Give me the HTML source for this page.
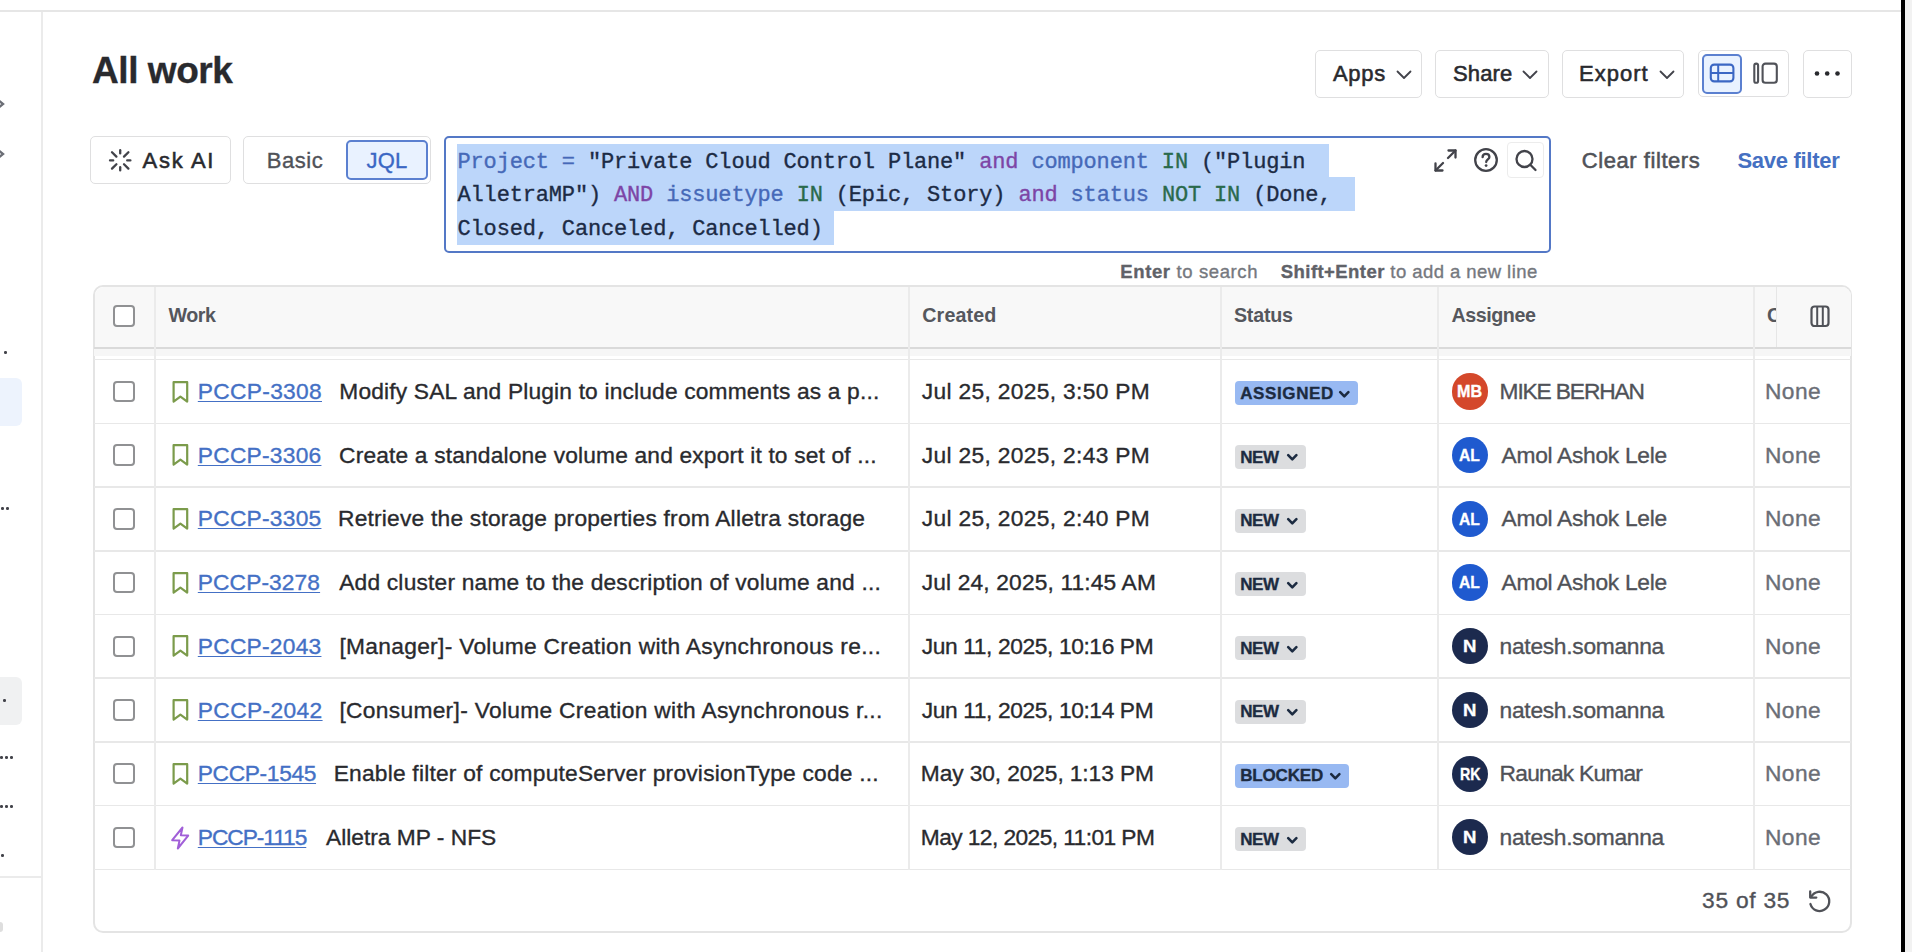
<!DOCTYPE html>
<html>
<head>
<meta charset="utf-8">
<style>
*{box-sizing:border-box;margin:0;padding:0}
html,body{width:1912px;height:952px;overflow:hidden;background:#fff}
body{position:relative;font-family:"Liberation Sans",sans-serif;color:#292a2e}
.a{position:absolute}
.t{position:absolute;white-space:nowrap;line-height:1;-webkit-text-stroke:0.35px currentColor}
.mono{font-family:"Liberation Mono",monospace}
</style>
</head>
<body>
<div class="a" style="left:0px;top:10px;width:1901px;height:2px;background:#e6e6e6"></div>
<div class="a" style="left:41px;top:12px;width:2px;height:940px;background:#ebebeb"></div>
<div class="a" style="left:0px;top:876px;width:41px;height:2px;background:#ebebeb"></div>
<div class="a" style="left:1901px;top:0px;width:4px;height:952px;background:#000"></div>
<div class="a" style="left:1905px;top:0px;width:7px;height:952px;background:#f2f2f2"></div>
<svg class="a" style="left:0;top:97px" width="6" height="14" viewBox="0 0 6 14"><path d="M-3 2 L3 7 L-3 12" fill="none" stroke="#6b6e76" stroke-width="2.4"/></svg>
<svg class="a" style="left:0;top:147px" width="6" height="14" viewBox="0 0 6 14"><path d="M-3 2 L3 7 L-3 12" fill="none" stroke="#6b6e76" stroke-width="2.4"/></svg>
<div class="a" style="left:0px;top:378px;width:22px;height:48px;background:#edf3fd;border-radius:0 6px 6px 0"></div>
<div class="a" style="left:0px;top:677px;width:22px;height:48px;background:#f0f1f2;border-radius:0 6px 6px 0"></div>
<div class="a" style="left:0px;top:922px;width:3px;height:10px;background:#c8c8c8;border-radius:0 3px 3px 0;opacity:0.6"></div>
<div class="a" style="left:4px;top:351px;width:2.5px;height:2.5px;background:#42434a;border-radius:50%"></div>
<div class="a" style="left:1px;top:507px;width:2.5px;height:2.5px;background:#42434a;border-radius:50%"></div>
<div class="a" style="left:6px;top:507px;width:2.5px;height:2.5px;background:#42434a;border-radius:50%"></div>
<div class="a" style="left:3px;top:699px;width:2.5px;height:2.5px;background:#42434a;border-radius:50%"></div>
<div class="a" style="left:0px;top:756px;width:2.5px;height:2.5px;background:#42434a;border-radius:50%"></div>
<div class="a" style="left:5px;top:756px;width:2.5px;height:2.5px;background:#42434a;border-radius:50%"></div>
<div class="a" style="left:10px;top:756px;width:2.5px;height:2.5px;background:#42434a;border-radius:50%"></div>
<div class="a" style="left:0px;top:805px;width:2.5px;height:2.5px;background:#42434a;border-radius:50%"></div>
<div class="a" style="left:5px;top:805px;width:2.5px;height:2.5px;background:#42434a;border-radius:50%"></div>
<div class="a" style="left:10px;top:805px;width:2.5px;height:2.5px;background:#42434a;border-radius:50%"></div>
<div class="a" style="left:1px;top:854px;width:2.5px;height:2.5px;background:#42434a;border-radius:50%"></div>
<div class="t" style="left:92.00px;top:52.33px;font-size:37px;font-weight:700;letter-spacing:-0.429px;color:#292a2e;">All work</div>
<div class="a" style="left:1315px;top:50px;width:107px;height:48px;border:1.6px solid #dfdfe0;border-radius:5px;background:#fff"></div>
<div class="t" style="left:1333.00px;top:63.01px;font-size:22px;font-weight:400;letter-spacing:0.667px;color:#292a2e;-webkit-text-stroke:0.55px currentColor">Apps</div>
<svg class="a" style="left:1396px;top:70px" width="16" height="10" viewBox="0 0 16 10"><path d="M1.5 1.5 L8 8 L14.5 1.5" fill="none" stroke="#42434a" stroke-width="1.8" stroke-linecap="round" stroke-linejoin="round"/></svg>
<div class="a" style="left:1435px;top:50px;width:114px;height:48px;border:1.6px solid #dfdfe0;border-radius:5px;background:#fff"></div>
<div class="t" style="left:1453.00px;top:63.01px;font-size:22px;font-weight:400;letter-spacing:0.125px;color:#292a2e;-webkit-text-stroke:0.55px currentColor">Share</div>
<svg class="a" style="left:1522px;top:70px" width="16" height="10" viewBox="0 0 16 10"><path d="M1.5 1.5 L8 8 L14.5 1.5" fill="none" stroke="#42434a" stroke-width="1.8" stroke-linecap="round" stroke-linejoin="round"/></svg>
<div class="a" style="left:1562px;top:50px;width:122px;height:48px;border:1.6px solid #dfdfe0;border-radius:5px;background:#fff"></div>
<div class="t" style="left:1579.00px;top:63.01px;font-size:22px;font-weight:400;letter-spacing:1.000px;color:#292a2e;-webkit-text-stroke:0.55px currentColor">Export</div>
<svg class="a" style="left:1658.5px;top:70px" width="16" height="10" viewBox="0 0 16 10"><path d="M1.5 1.5 L8 8 L14.5 1.5" fill="none" stroke="#42434a" stroke-width="1.8" stroke-linecap="round" stroke-linejoin="round"/></svg>
<div class="a" style="left:1698px;top:50px;width:91px;height:47px;border:1.6px solid #dfdfe0;border-radius:5px;background:#fff"></div>
<div class="a" style="left:1702px;top:54px;width:40px;height:40px;border:2px solid #5b80d0;border-radius:5px;background:#e9f2ff"></div>
<svg class="a" style="left:1708px;top:62px" width="28" height="22" viewBox="0 0 28 22"><rect x="2.8" y="2.6" width="22.6" height="16.8" rx="3.4" fill="none" stroke="#3b67c4" stroke-width="2.1"/><line x1="2.8" y1="11" x2="25.4" y2="11" stroke="#3b67c4" stroke-width="2"/><line x1="10.2" y1="2.6" x2="10.2" y2="19.4" stroke="#3b67c4" stroke-width="2"/></svg>
<svg class="a" style="left:1751px;top:61px" width="30" height="24" viewBox="0 0 30 24"><rect x="3.3" y="2.6" width="3.8" height="19.2" rx="1.9" fill="none" stroke="#505258" stroke-width="2.1"/><rect x="11.6" y="2.6" width="14.2" height="19.2" rx="2.8" fill="none" stroke="#505258" stroke-width="2.1"/></svg>
<div class="a" style="left:1803px;top:50px;width:49px;height:48px;border:1.6px solid #dfdfe0;border-radius:5px;background:#fff"></div>
<svg class="a" style="left:1812px;top:68px" width="32" height="12" viewBox="0 0 32 12"><circle cx="5" cy="5.5" r="2.3" fill="#292a2e"/><circle cx="15.2" cy="5.5" r="2.3" fill="#292a2e"/><circle cx="25.5" cy="5.5" r="2.3" fill="#292a2e"/></svg>
<div class="a" style="left:90px;top:136px;width:141px;height:48px;border:1.6px solid #dfdfe0;border-radius:5px;background:#fff"></div>
<svg class="a" style="left:106px;top:146px" width="29" height="29" viewBox="0 0 29 29"><g stroke="#42434a" stroke-width="2.3" stroke-linecap="round" fill="none">
<line x1="14.2" y1="4.2" x2="14.2" y2="7.4"/><line x1="14.2" y1="21.2" x2="14.2" y2="24.4"/>
<line x1="4" y1="14.4" x2="7.2" y2="14.4"/><line x1="21.2" y1="14.4" x2="24.4" y2="14.4"/>
<line x1="6" y1="6.2" x2="10.4" y2="10.6"/><line x1="18" y1="18.2" x2="22.4" y2="22.6"/>
<line x1="22.4" y1="6.2" x2="18" y2="10.6"/><line x1="10.4" y1="18.2" x2="6" y2="22.6"/></g></svg>
<div class="t" style="left:142.60px;top:149.91px;font-size:22px;font-weight:400;letter-spacing:1.680px;color:#292a2e;-webkit-text-stroke:0.55px currentColor">Ask AI</div>
<div class="a" style="left:243px;top:136px;width:188px;height:48px;border:1.6px solid #dfdfe0;border-radius:5px;background:#fff"></div>
<div class="t" style="left:266.80px;top:149.91px;font-size:22px;font-weight:400;letter-spacing:0.550px;color:#505258;">Basic</div>
<div class="a" style="left:346px;top:140px;width:82px;height:40px;border:2px solid #5b80d0;border-radius:5px;background:#e9f2ff"></div>
<div class="t" style="left:366.60px;top:149.91px;font-size:22px;font-weight:400;letter-spacing:0.200px;color:#3b67c4;">JQL</div>
<div class="t" style="left:1581.80px;top:149.91px;font-size:22px;font-weight:400;letter-spacing:0.558px;color:#505258;-webkit-text-stroke:0.55px currentColor">Clear filters</div>
<div class="t" style="left:1737.40px;top:149.91px;font-size:22px;font-weight:700;letter-spacing:-0.280px;color:#4570c2;-webkit-text-stroke:0">Save filter</div>
<div class="t" style="left:1120.30px;top:262.87px;font-size:18.5px;font-weight:400;letter-spacing:0.621px;color:#75787e;"><b style="color:#606268">Enter</b> to search</div>
<div class="t" style="left:1280.80px;top:262.87px;font-size:18.5px;font-weight:400;letter-spacing:0.436px;color:#75787e;"><b style="color:#606268">Shift+Enter</b> to add a new line</div>
<div class="a" style="left:444px;top:136px;width:1107px;height:117px;border:2.5px solid #5478c6;border-radius:5px;background:#fff"></div>
<div class="a" style="left:457px;top:144px;width:872px;height:34px;background:#bcd6fa"></div>
<div class="a" style="left:457px;top:177px;width:898px;height:34px;background:#bcd6fa"></div>
<div class="a" style="left:457px;top:210px;width:377px;height:35px;background:#bcd6fa"></div>
<div class="t mono" style="left:457.5px;top:145.70px;font-size:22px;letter-spacing:-0.16px;line-height:33.6px;white-space:pre"><span style="color:#4669b8">Project</span> <span style="color:#4669b8">=</span> <span style="color:#1c2b45">"Private Cloud Control Plane"</span> <span style="color:#7d45a6">and</span> <span style="color:#4669b8">component</span> <span style="color:#2a6a4c">IN</span> <span style="color:#1c2b45">("Plugin</span> </div>
<div class="t mono" style="left:457.5px;top:179.30px;font-size:22px;letter-spacing:-0.16px;line-height:33.6px;white-space:pre"><span style="color:#1c2b45">AlletraMP")</span> <span style="color:#7d45a6">AND</span> <span style="color:#4669b8">issuetype</span> <span style="color:#2a6a4c">IN</span> <span style="color:#1c2b45">(Epic, Story)</span> <span style="color:#7d45a6">and</span> <span style="color:#4669b8">status</span> <span style="color:#2a6a4c">NOT IN</span> <span style="color:#1c2b45">(Done,</span> </div>
<div class="t mono" style="left:457.5px;top:212.90px;font-size:22px;letter-spacing:-0.16px;line-height:33.6px;white-space:pre"><span style="color:#1c2b45">Closed, Canceled, Cancelled)</span></div>
<svg class="a" style="left:1432px;top:147px" width="27" height="27" viewBox="0 0 27 27"><g stroke="#42434a" stroke-width="2.3" fill="none" stroke-linecap="round" stroke-linejoin="round"><path d="M16.5 3.5 H23.5 V10.5"/><path d="M23.5 3.5 L16 11"/><path d="M3.5 16.5 V23.5 H10.5"/><path d="M3.5 23.5 L11 16"/></g></svg>
<svg class="a" style="left:1472px;top:146px" width="28" height="28" viewBox="0 0 28 28"><circle cx="14" cy="14" r="10.8" fill="none" stroke="#42434a" stroke-width="2.3"/><path d="M10.6 11.2 C10.6 8.9 12.2 7.8 14 7.8 C15.9 7.8 17.4 9 17.4 10.9 C17.4 13.2 14.2 13.6 14.2 16" fill="none" stroke="#42434a" stroke-width="2.3" stroke-linecap="round"/><circle cx="14.1" cy="19.6" r="1.4" fill="#42434a"/></svg>
<div class="a" style="left:1507px;top:142px;width:37px;height:36px;border:1.5px solid #ececec;border-radius:4px"></div>
<svg class="a" style="left:1512px;top:147px" width="28" height="28" viewBox="0 0 28 28"><circle cx="12.5" cy="12" r="8" fill="none" stroke="#42434a" stroke-width="2.3"/><line x1="18.3" y1="17.8" x2="23.5" y2="23" stroke="#42434a" stroke-width="2.3" stroke-linecap="round"/></svg>
<div class="a" style="left:93px;top:285px;width:1759px;height:648px;border:2px solid #e4e4e4;border-radius:10px;background:#fff;overflow:hidden"></div>
<div class="a" style="left:94.5px;top:286.5px;width:1756px;height:60.5px;background:#f8f8f8;border-radius:9px 9px 0 0"></div>
<div class="a" style="left:94px;top:347px;width:1757px;height:2px;background:#dadada"></div>
<div class="a" style="left:94px;top:349px;width:1757px;height:7px;background:#f6f6f6"></div>
<div class="a" style="left:94px;top:358.9px;width:1757px;height:1.6px;background:#e8e8e8"></div>
<div class="a" style="left:94px;top:422.6px;width:1757px;height:1.6px;background:#e8e8e8"></div>
<div class="a" style="left:94px;top:486.3px;width:1757px;height:1.6px;background:#e8e8e8"></div>
<div class="a" style="left:94px;top:550.0px;width:1757px;height:1.6px;background:#e8e8e8"></div>
<div class="a" style="left:94px;top:613.7px;width:1757px;height:1.6px;background:#e8e8e8"></div>
<div class="a" style="left:94px;top:677.4px;width:1757px;height:1.6px;background:#e8e8e8"></div>
<div class="a" style="left:94px;top:741.1px;width:1757px;height:1.6px;background:#e8e8e8"></div>
<div class="a" style="left:94px;top:804.8px;width:1757px;height:1.6px;background:#e8e8e8"></div>
<div class="a" style="left:94px;top:868.5px;width:1757px;height:1.6px;background:#e8e8e8"></div>
<div class="a" style="left:154px;top:286.5px;width:2px;height:583.3px;background:#ebebeb"></div>
<div class="a" style="left:908px;top:286.5px;width:2px;height:583.3px;background:#ebebeb"></div>
<div class="a" style="left:1220px;top:286.5px;width:2px;height:583.3px;background:#ebebeb"></div>
<div class="a" style="left:1436.5px;top:286.5px;width:2px;height:583.3px;background:#ebebeb"></div>
<div class="a" style="left:1752.5px;top:286.5px;width:2px;height:583.3px;background:#ebebeb"></div>
<div class="a" style="left:1776px;top:286.5px;width:74.5px;height:60.5px;background:#f8f8f8;border-left:1.5px solid #e6e6e6;border-top-right-radius:9px"></div>
<div class="a" style="left:113.3px;top:305px;width:21.5px;height:21.5px;border:2px solid #909193;border-radius:4px;background:#fff"></div>
<div class="t" style="left:168.40px;top:305.55px;font-size:19.7px;font-weight:700;letter-spacing:-0.467px;color:#55575d;-webkit-text-stroke:0">Work</div>
<div class="t" style="left:922.30px;top:305.55px;font-size:19.7px;font-weight:700;letter-spacing:0.100px;color:#55575d;-webkit-text-stroke:0">Created</div>
<div class="t" style="left:1233.90px;top:305.55px;font-size:19.7px;font-weight:700;letter-spacing:-0.200px;color:#55575d;-webkit-text-stroke:0">Status</div>
<div class="t" style="left:1451.50px;top:305.55px;font-size:19.7px;font-weight:700;letter-spacing:-0.457px;color:#55575d;-webkit-text-stroke:0">Assignee</div>
<div class="a" style="left:1766px;top:300px;width:10px;height:30px;overflow:hidden"><div class="t" style="left:1px;top:5.6px;font-size:19.7px;font-weight:700;color:#55575d;-webkit-text-stroke:0">C</div></div>
<svg class="a" style="left:1808px;top:303px" width="24" height="26" viewBox="0 0 24 26"><rect x="3.5" y="3.5" width="17" height="19.5" rx="3" fill="none" stroke="#505258" stroke-width="2.2"/><line x1="9.2" y1="3.5" x2="9.2" y2="23" stroke="#505258" stroke-width="2"/><line x1="14.8" y1="3.5" x2="14.8" y2="23" stroke="#505258" stroke-width="2"/></svg>
<div class="a" style="left:113.3px;top:380.75px;width:21.5px;height:21.5px;border:2px solid #909193;border-radius:4px;background:#fff"></div>
<svg class="a" style="left:170px;top:378.6px" width="21" height="26" viewBox="0 0 21 26"><path d="M3.6 3.2 H17.2 V22.6 L10.4 17.6 L3.6 22.6 Z" fill="none" stroke="#7b9b4b" stroke-width="2.2" stroke-linejoin="round"/></svg>
<div class="t" style="left:197.80px;top:380.03px;font-size:22.75px;font-weight:400;letter-spacing:0.312px;color:#4470c5;text-decoration:underline;text-underline-offset:2px;text-decoration-thickness:1.2px">PCCP-3308</div>
<div class="t" style="left:339.30px;top:380.03px;font-size:22.75px;font-weight:400;letter-spacing:0.168px;color:#292a2e;">Modify SAL and Plugin to include comments as a p...</div>
<div class="t" style="left:921.80px;top:380.03px;font-size:22.75px;font-weight:400;letter-spacing:0.335px;color:#292a2e;">Jul 25, 2025, 3:50 PM</div>
<div class="a" style="left:1235px;top:381.2px;width:123px;height:24px;background:#98b9f2;border-radius:4px"></div>
<div class="t" style="left:1240.20px;top:384.99px;font-size:17px;font-weight:700;letter-spacing:0.614px;color:#1c2b41;">ASSIGNED</div>
<svg class="a" style="left:1338px;top:389.8px" width="13" height="9" viewBox="0 0 13 9"><path d="M2.2 2.2 L6.3 6.3 L10.4 2.2" fill="none" stroke="#1c2b41" stroke-width="2.6" stroke-linecap="round" stroke-linejoin="round"/></svg>
<div class="a" style="left:1451.7px;top:373.4px;width:36.2px;height:36.2px;border-radius:50%;background:#d4482b"></div>
<div class="t" style="left:1457.15px;top:383.38px;font-size:17px;font-weight:700;letter-spacing:0.000px;color:#ffffff;transform:scaleX(0.9480);transform-origin:0 0;">MB</div>
<div class="t" style="left:1499.60px;top:380.03px;font-size:22.75px;font-weight:400;letter-spacing:-1.140px;color:#505258;">MIKE BERHAN</div>
<div class="t" style="left:1764.90px;top:380.03px;font-size:22.75px;font-weight:400;letter-spacing:0.500px;color:#6b6e76;">None</div>
<div class="a" style="left:113.3px;top:444.45px;width:21.5px;height:21.5px;border:2px solid #909193;border-radius:4px;background:#fff"></div>
<svg class="a" style="left:170px;top:442.2px" width="21" height="26" viewBox="0 0 21 26"><path d="M3.6 3.2 H17.2 V22.6 L10.4 17.6 L3.6 22.6 Z" fill="none" stroke="#7b9b4b" stroke-width="2.2" stroke-linejoin="round"/></svg>
<div class="t" style="left:197.80px;top:443.73px;font-size:22.75px;font-weight:400;letter-spacing:0.250px;color:#4470c5;text-decoration:underline;text-underline-offset:2px;text-decoration-thickness:1.2px">PCCP-3306</div>
<div class="t" style="left:339.10px;top:443.73px;font-size:22.75px;font-weight:400;letter-spacing:0.168px;color:#292a2e;">Create a standalone volume and export it to set of ...</div>
<div class="t" style="left:921.80px;top:443.73px;font-size:22.75px;font-weight:400;letter-spacing:0.335px;color:#292a2e;">Jul 25, 2025, 2:43 PM</div>
<div class="a" style="left:1235px;top:444.9px;width:71px;height:24px;background:#dcdddf;border-radius:4px"></div>
<div class="t" style="left:1240.20px;top:448.69px;font-size:17px;font-weight:700;letter-spacing:-0.450px;color:#1c2b41;">NEW</div>
<svg class="a" style="left:1286px;top:453.4px" width="13" height="9" viewBox="0 0 13 9"><path d="M2.2 2.2 L6.3 6.3 L10.4 2.2" fill="none" stroke="#1c2b41" stroke-width="2.6" stroke-linecap="round" stroke-linejoin="round"/></svg>
<div class="a" style="left:1451.7px;top:437.1px;width:36.2px;height:36.2px;border-radius:50%;background:#1f5acf"></div>
<div class="t" style="left:1458.88px;top:447.08px;font-size:17px;font-weight:700;letter-spacing:0.000px;color:#ffffff;transform:scaleX(0.9190);transform-origin:0 0;">AL</div>
<div class="t" style="left:1501.60px;top:443.73px;font-size:22.75px;font-weight:400;letter-spacing:-0.286px;color:#505258;">Amol Ashok Lele</div>
<div class="t" style="left:1764.90px;top:443.73px;font-size:22.75px;font-weight:400;letter-spacing:0.500px;color:#6b6e76;">None</div>
<div class="a" style="left:113.3px;top:508.15000000000003px;width:21.5px;height:21.5px;border:2px solid #909193;border-radius:4px;background:#fff"></div>
<svg class="a" style="left:170px;top:506.0px" width="21" height="26" viewBox="0 0 21 26"><path d="M3.6 3.2 H17.2 V22.6 L10.4 17.6 L3.6 22.6 Z" fill="none" stroke="#7b9b4b" stroke-width="2.2" stroke-linejoin="round"/></svg>
<div class="t" style="left:197.80px;top:507.43px;font-size:22.75px;font-weight:400;letter-spacing:0.250px;color:#4470c5;text-decoration:underline;text-underline-offset:2px;text-decoration-thickness:1.2px">PCCP-3305</div>
<div class="t" style="left:338.00px;top:507.43px;font-size:22.75px;font-weight:400;letter-spacing:0.216px;color:#292a2e;">Retrieve the storage properties from Alletra storage</div>
<div class="t" style="left:921.80px;top:507.43px;font-size:22.75px;font-weight:400;letter-spacing:0.335px;color:#292a2e;">Jul 25, 2025, 2:40 PM</div>
<div class="a" style="left:1235px;top:508.7px;width:71px;height:24px;background:#dcdddf;border-radius:4px"></div>
<div class="t" style="left:1240.20px;top:512.38px;font-size:17px;font-weight:700;letter-spacing:-0.450px;color:#1c2b41;">NEW</div>
<svg class="a" style="left:1286px;top:517.2px" width="13" height="9" viewBox="0 0 13 9"><path d="M2.2 2.2 L6.3 6.3 L10.4 2.2" fill="none" stroke="#1c2b41" stroke-width="2.6" stroke-linecap="round" stroke-linejoin="round"/></svg>
<div class="a" style="left:1451.7px;top:500.8px;width:36.2px;height:36.2px;border-radius:50%;background:#1f5acf"></div>
<div class="t" style="left:1458.88px;top:510.79px;font-size:17px;font-weight:700;letter-spacing:0.000px;color:#ffffff;transform:scaleX(0.9190);transform-origin:0 0;">AL</div>
<div class="t" style="left:1501.60px;top:507.43px;font-size:22.75px;font-weight:400;letter-spacing:-0.286px;color:#505258;">Amol Ashok Lele</div>
<div class="t" style="left:1764.90px;top:507.43px;font-size:22.75px;font-weight:400;letter-spacing:0.500px;color:#6b6e76;">None</div>
<div class="a" style="left:113.3px;top:571.85px;width:21.5px;height:21.5px;border:2px solid #909193;border-radius:4px;background:#fff"></div>
<svg class="a" style="left:170px;top:569.6px" width="21" height="26" viewBox="0 0 21 26"><path d="M3.6 3.2 H17.2 V22.6 L10.4 17.6 L3.6 22.6 Z" fill="none" stroke="#7b9b4b" stroke-width="2.2" stroke-linejoin="round"/></svg>
<div class="t" style="left:197.80px;top:571.13px;font-size:22.75px;font-weight:400;letter-spacing:0.100px;color:#4470c5;text-decoration:underline;text-underline-offset:2px;text-decoration-thickness:1.2px">PCCP-3278</div>
<div class="t" style="left:339.20px;top:571.13px;font-size:22.75px;font-weight:400;letter-spacing:0.202px;color:#292a2e;">Add cluster name to the description of volume and ...</div>
<div class="t" style="left:921.80px;top:571.13px;font-size:22.75px;font-weight:400;letter-spacing:0.143px;color:#292a2e;">Jul 24, 2025, 11:45 AM</div>
<div class="a" style="left:1235px;top:572.4px;width:71px;height:24px;background:#dcdddf;border-radius:4px"></div>
<div class="t" style="left:1240.20px;top:576.08px;font-size:17px;font-weight:700;letter-spacing:-0.450px;color:#1c2b41;">NEW</div>
<svg class="a" style="left:1286px;top:580.9px" width="13" height="9" viewBox="0 0 13 9"><path d="M2.2 2.2 L6.3 6.3 L10.4 2.2" fill="none" stroke="#1c2b41" stroke-width="2.6" stroke-linecap="round" stroke-linejoin="round"/></svg>
<div class="a" style="left:1451.7px;top:564.4px;width:36.2px;height:36.2px;border-radius:50%;background:#1f5acf"></div>
<div class="t" style="left:1458.88px;top:574.49px;font-size:17px;font-weight:700;letter-spacing:0.000px;color:#ffffff;transform:scaleX(0.9190);transform-origin:0 0;">AL</div>
<div class="t" style="left:1501.60px;top:571.13px;font-size:22.75px;font-weight:400;letter-spacing:-0.286px;color:#505258;">Amol Ashok Lele</div>
<div class="t" style="left:1764.90px;top:571.13px;font-size:22.75px;font-weight:400;letter-spacing:0.500px;color:#6b6e76;">None</div>
<div class="a" style="left:113.3px;top:635.5500000000001px;width:21.5px;height:21.5px;border:2px solid #909193;border-radius:4px;background:#fff"></div>
<svg class="a" style="left:170px;top:633.4px" width="21" height="26" viewBox="0 0 21 26"><path d="M3.6 3.2 H17.2 V22.6 L10.4 17.6 L3.6 22.6 Z" fill="none" stroke="#7b9b4b" stroke-width="2.2" stroke-linejoin="round"/></svg>
<div class="t" style="left:197.80px;top:634.83px;font-size:22.75px;font-weight:400;letter-spacing:0.250px;color:#4470c5;text-decoration:underline;text-underline-offset:2px;text-decoration-thickness:1.2px">PCCP-2043</div>
<div class="t" style="left:339.40px;top:634.83px;font-size:22.75px;font-weight:400;letter-spacing:0.312px;color:#292a2e;">[Manager]- Volume Creation with Asynchronous re...</div>
<div class="t" style="left:921.80px;top:634.83px;font-size:22.75px;font-weight:400;letter-spacing:-0.386px;color:#292a2e;">Jun 11, 2025, 10:16 PM</div>
<div class="a" style="left:1235px;top:636.1px;width:71px;height:24px;background:#dcdddf;border-radius:4px"></div>
<div class="t" style="left:1240.20px;top:639.78px;font-size:17px;font-weight:700;letter-spacing:-0.450px;color:#1c2b41;">NEW</div>
<svg class="a" style="left:1286px;top:644.6px" width="13" height="9" viewBox="0 0 13 9"><path d="M2.2 2.2 L6.3 6.3 L10.4 2.2" fill="none" stroke="#1c2b41" stroke-width="2.6" stroke-linecap="round" stroke-linejoin="round"/></svg>
<div class="a" style="left:1451.7px;top:628.1px;width:36.2px;height:36.2px;border-radius:50%;background:#1c2a4e"></div>
<div class="t" style="left:1463.11px;top:638.19px;font-size:17px;font-weight:700;letter-spacing:0.000px;color:#ffffff;transform:scaleX(1.0900);transform-origin:0 0;">N</div>
<div class="t" style="left:1499.60px;top:634.83px;font-size:22.75px;font-weight:400;letter-spacing:-0.277px;color:#505258;">natesh.somanna</div>
<div class="t" style="left:1764.90px;top:634.83px;font-size:22.75px;font-weight:400;letter-spacing:0.500px;color:#6b6e76;">None</div>
<div class="a" style="left:113.3px;top:699.2500000000001px;width:21.5px;height:21.5px;border:2px solid #909193;border-radius:4px;background:#fff"></div>
<svg class="a" style="left:170px;top:697.1px" width="21" height="26" viewBox="0 0 21 26"><path d="M3.6 3.2 H17.2 V22.6 L10.4 17.6 L3.6 22.6 Z" fill="none" stroke="#7b9b4b" stroke-width="2.2" stroke-linejoin="round"/></svg>
<div class="t" style="left:197.80px;top:698.53px;font-size:22.75px;font-weight:400;letter-spacing:0.375px;color:#4470c5;text-decoration:underline;text-underline-offset:2px;text-decoration-thickness:1.2px">PCCP-2042</div>
<div class="t" style="left:339.40px;top:698.53px;font-size:22.75px;font-weight:400;letter-spacing:0.318px;color:#292a2e;">[Consumer]- Volume Creation with Asynchronous r...</div>
<div class="t" style="left:921.80px;top:698.53px;font-size:22.75px;font-weight:400;letter-spacing:-0.386px;color:#292a2e;">Jun 11, 2025, 10:14 PM</div>
<div class="a" style="left:1235px;top:699.8px;width:71px;height:24px;background:#dcdddf;border-radius:4px"></div>
<div class="t" style="left:1240.20px;top:703.49px;font-size:17px;font-weight:700;letter-spacing:-0.450px;color:#1c2b41;">NEW</div>
<svg class="a" style="left:1286px;top:708.3px" width="13" height="9" viewBox="0 0 13 9"><path d="M2.2 2.2 L6.3 6.3 L10.4 2.2" fill="none" stroke="#1c2b41" stroke-width="2.6" stroke-linecap="round" stroke-linejoin="round"/></svg>
<div class="a" style="left:1451.7px;top:691.9px;width:36.2px;height:36.2px;border-radius:50%;background:#1c2a4e"></div>
<div class="t" style="left:1463.11px;top:701.89px;font-size:17px;font-weight:700;letter-spacing:0.000px;color:#ffffff;transform:scaleX(1.0900);transform-origin:0 0;">N</div>
<div class="t" style="left:1499.60px;top:698.53px;font-size:22.75px;font-weight:400;letter-spacing:-0.277px;color:#505258;">natesh.somanna</div>
<div class="t" style="left:1764.90px;top:698.53px;font-size:22.75px;font-weight:400;letter-spacing:0.500px;color:#6b6e76;">None</div>
<div class="a" style="left:113.3px;top:762.9500000000002px;width:21.5px;height:21.5px;border:2px solid #909193;border-radius:4px;background:#fff"></div>
<svg class="a" style="left:170px;top:760.8px" width="21" height="26" viewBox="0 0 21 26"><path d="M3.6 3.2 H17.2 V22.6 L10.4 17.6 L3.6 22.6 Z" fill="none" stroke="#7b9b4b" stroke-width="2.2" stroke-linejoin="round"/></svg>
<div class="t" style="left:197.80px;top:762.23px;font-size:22.75px;font-weight:400;letter-spacing:-0.350px;color:#4470c5;text-decoration:underline;text-underline-offset:2px;text-decoration-thickness:1.2px">PCCP-1545</div>
<div class="t" style="left:333.70px;top:762.23px;font-size:22.75px;font-weight:400;letter-spacing:0.217px;color:#292a2e;">Enable filter of computeServer provisionType code ...</div>
<div class="t" style="left:920.80px;top:762.23px;font-size:22.75px;font-weight:400;letter-spacing:-0.105px;color:#292a2e;">May 30, 2025, 1:13 PM</div>
<div class="a" style="left:1235px;top:763.5px;width:114px;height:24px;background:#98b9f2;border-radius:4px"></div>
<div class="t" style="left:1240.20px;top:767.19px;font-size:17px;font-weight:700;letter-spacing:-0.167px;color:#1c2b41;">BLOCKED</div>
<svg class="a" style="left:1329px;top:772.0px" width="13" height="9" viewBox="0 0 13 9"><path d="M2.2 2.2 L6.3 6.3 L10.4 2.2" fill="none" stroke="#1c2b41" stroke-width="2.6" stroke-linecap="round" stroke-linejoin="round"/></svg>
<div class="a" style="left:1451.7px;top:755.6px;width:36.2px;height:36.2px;border-radius:50%;background:#1c2a4e"></div>
<div class="t" style="left:1459.66px;top:765.59px;font-size:17px;font-weight:700;letter-spacing:0.000px;color:#ffffff;transform:scaleX(0.8391);transform-origin:0 0;">RK</div>
<div class="t" style="left:1499.60px;top:762.23px;font-size:22.75px;font-weight:400;letter-spacing:-0.764px;color:#505258;">Raunak Kumar</div>
<div class="t" style="left:1764.90px;top:762.23px;font-size:22.75px;font-weight:400;letter-spacing:0.500px;color:#6b6e76;">None</div>
<div class="a" style="left:113.3px;top:826.6500000000001px;width:21.5px;height:21.5px;border:2px solid #909193;border-radius:4px;background:#fff"></div>
<svg class="a" style="left:168px;top:823.5px" width="24" height="28" viewBox="0 0 24 28"><path d="M14.5 3.5 L12.8 11.2 L20.2 11.6 L9.8 24.5 L11.5 16.6 L4.2 16.2 Z" fill="none" stroke="#a15fd8" stroke-width="2" stroke-linejoin="round"/></svg>
<div class="t" style="left:197.80px;top:825.93px;font-size:22.75px;font-weight:400;letter-spacing:-1.062px;color:#4470c5;text-decoration:underline;text-underline-offset:2px;text-decoration-thickness:1.2px">PCCP-1115</div>
<div class="t" style="left:326.00px;top:825.93px;font-size:22.75px;font-weight:400;letter-spacing:0.000px;color:#292a2e;">Alletra MP - NFS</div>
<div class="t" style="left:920.80px;top:825.93px;font-size:22.75px;font-weight:400;letter-spacing:-0.576px;color:#292a2e;">May 12, 2025, 11:01 PM</div>
<div class="a" style="left:1235px;top:827.2px;width:71px;height:24px;background:#dcdddf;border-radius:4px"></div>
<div class="t" style="left:1240.20px;top:830.88px;font-size:17px;font-weight:700;letter-spacing:-0.450px;color:#1c2b41;">NEW</div>
<svg class="a" style="left:1286px;top:835.7px" width="13" height="9" viewBox="0 0 13 9"><path d="M2.2 2.2 L6.3 6.3 L10.4 2.2" fill="none" stroke="#1c2b41" stroke-width="2.6" stroke-linecap="round" stroke-linejoin="round"/></svg>
<div class="a" style="left:1451.7px;top:819.2px;width:36.2px;height:36.2px;border-radius:50%;background:#1c2a4e"></div>
<div class="t" style="left:1463.11px;top:829.29px;font-size:17px;font-weight:700;letter-spacing:0.000px;color:#ffffff;transform:scaleX(1.0900);transform-origin:0 0;">N</div>
<div class="t" style="left:1499.60px;top:825.93px;font-size:22.75px;font-weight:400;letter-spacing:-0.277px;color:#505258;">natesh.somanna</div>
<div class="t" style="left:1764.90px;top:825.93px;font-size:22.75px;font-weight:400;letter-spacing:0.500px;color:#6b6e76;">None</div>
<div class="t" style="left:1702.00px;top:889.38px;font-size:22.75px;font-weight:400;letter-spacing:0.757px;color:#505258;">35 of 35</div>
<svg class="a" style="left:1805px;top:887px" width="29" height="28" viewBox="0 0 29 28"><path d="M6.2 9.8 A9.6 9.6 0 1 1 5.4 17" fill="none" stroke="#505258" stroke-width="2.3" stroke-linecap="round"/><path d="M5.2 4.5 V10.6 H11.3" fill="none" stroke="#505258" stroke-width="2.3" stroke-linecap="round" stroke-linejoin="round"/></svg>
</body>
</html>
